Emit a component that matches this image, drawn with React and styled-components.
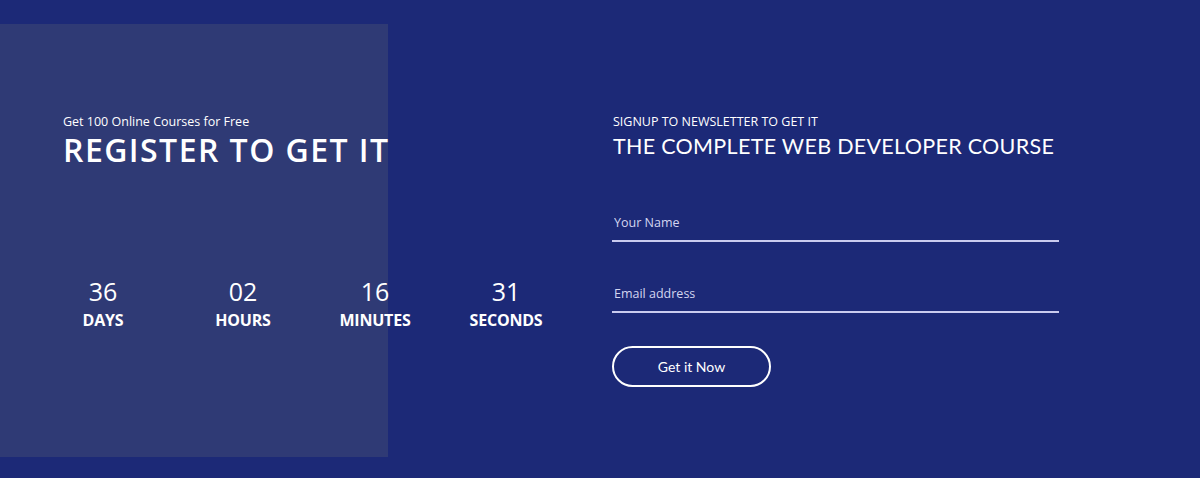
import React from "react";
import styled, { createGlobalStyle } from "styled-components";

const Global = createGlobalStyle`
  html, body { margin: 0; padding: 0; background: #1c2977; }
  * { box-sizing: border-box; }
`;

const Section = styled.section`
  width: 1200px;
  height: 478px;
  background:
    linear-gradient(#2f3a75, #2f3a75) no-repeat 0 24px / 388px 433px,
    #1c2977;
  display: flex;
  padding: 113px 0 0 63px;
  color: #fff;
`;

const LeftCol = styled.div`
  width: 550px;
  flex: none;
  display: flex;
  flex-direction: column;
`;

const RightCol = styled.div`
  flex: none;
  width: 500px;
  display: flex;
  flex-direction: column;
`;

const Kicker = styled.p`
  margin: 0;
  font-family: "Open Sans", sans-serif;
  font-size: 12.5px;
  line-height: 18px;
  color: #fff;
  text-transform: ${(p) => (p.$upper ? "uppercase" : "none")};
`;

const BigTitle = styled.h2`
  margin: 0;
  font-family: "Open Sans", sans-serif;
  font-weight: 600;
  font-size: 32px;
  line-height: 38px;
  letter-spacing: 1.45px;
  white-space: nowrap;
`;

const SubTitle = styled.h3`
  margin: 0;
  font-family: Lato, sans-serif;
  font-weight: 400;
  font-size: 21.5px;
  line-height: 30px;
  letter-spacing: 0.3px;
  white-space: nowrap;
`;

const Countdown = styled.div`
  display: grid;
  grid-template-columns: 80px 200px 64px 198px;
  margin-top: 105px;
`;

const Unit = styled.div`
  display: flex;
  flex-direction: column;
  align-items: center;
  font-family: "Open Sans", sans-serif;
`;

const Num = styled.span`
  font-size: 25px;
  font-weight: 400;
  line-height: 35px;
`;

const Label = styled.span`
  font-size: 16px;
  font-weight: 700;
  line-height: 22px;
  letter-spacing: -0.2px;
`;

const Form = styled.form`
  display: flex;
  flex-direction: column;
  margin-top: 41px;
`;

const Field = styled.input`
  width: 447px;
  height: 40px;
  margin: 0 0 31px -1px;
  padding: 2px 2px 0;
  background: transparent;
  border: none;
  border-bottom: 2px solid #c9cbef;
  font-family: "Open Sans", sans-serif;
  font-size: 12.5px;
  color: #fff;
  outline: none;
  &::placeholder { color: #d3d5f0; opacity: 1; }
`;

const Button = styled.button`
  width: 159px;
  height: 41px;
  margin: 2px 0 0 -1px;
  border: 2px solid #fff;
  border-radius: 21px;
  background: transparent;
  color: #fff;
  font-family: Lato, sans-serif;
  font-size: 14px;
  cursor: pointer;
`;

const units = [
  ["36", "DAYS"],
  ["02", "HOURS"],
  ["16", "MINUTES"],
  ["31", "SECONDS"],
];

export default function App() {
  return (
    <>
      <Global />
      <Section>
        <LeftCol>
          <Kicker>Get 100 Online Courses for Free</Kicker>
          <BigTitle>REGISTER TO GET IT</BigTitle>
          <Countdown>
            {units.map(([n, l]) => (
              <Unit key={l}>
                <Num>{n}</Num>
                <Label>{l}</Label>
              </Unit>
            ))}
          </Countdown>
        </LeftCol>
        <RightCol>
          <Kicker $upper>Signup to newsletter to get it</Kicker>
          <SubTitle>THE COMPLETE WEB DEVELOPER COURSE</SubTitle>
          <Form onSubmit={(e) => e.preventDefault()}>
            <Field type="text" placeholder="Your Name" />
            <Field type="email" placeholder="Email address" />
            <Button type="submit">Get it Now</Button>
          </Form>
        </RightCol>
      </Section>
    </>
  );
}
